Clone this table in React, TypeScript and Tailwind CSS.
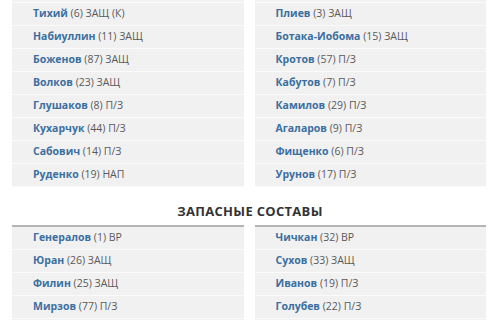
const lineup: [string, string, string][][] = [
  [
    ["Тихий", "6", "ЗАЩ (К)"],
    ["Набиуллин", "11", "ЗАЩ"],
    ["Боженов", "87", "ЗАЩ"],
    ["Волков", "23", "ЗАЩ"],
    ["Глушаков", "8", "П/З"],
    ["Кухарчук", "44", "П/З"],
    ["Сабович", "14", "П/З"],
    ["Руденко", "19", "НАП"],
  ],
  [
    ["Плиев", "3", "ЗАЩ"],
    ["Ботака-Иобома", "15", "ЗАЩ"],
    ["Кротов", "57", "П/З"],
    ["Кабутов", "7", "П/З"],
    ["Камилов", "29", "П/З"],
    ["Агаларов", "9", "П/З"],
    ["Фищенко", "6", "П/З"],
    ["Урунов", "17", "П/З"],
  ],
];

const subs: [string, string, string][][] = [
  [
    ["Генералов", "1", "ВР"],
    ["Юран", "26", "ЗАЩ"],
    ["Филин", "25", "ЗАЩ"],
    ["Мирзов", "77", "П/З"],
    ["", "", ""],
  ],
  [
    ["Чичкан", "32", "ВР"],
    ["Сухов", "33", "ЗАЩ"],
    ["Иванов", "19", "П/З"],
    ["Голубев", "22", "П/З"],
    ["", "", ""],
  ],
];

const Row = ({ p }: { p: [string, string, string] }) => (
  <div className="h-[23px] bg-[#f1f1f1] border-b border-[#fbfbfb] flex items-center pl-[21px] text-[10.5px] whitespace-nowrap">
    {p[0] && (
      <>
        <span className="font-bold text-[#3b6fa0]">{p[0]}</span>
        <span className="text-[#5a5a5a]">&nbsp;({p[1]}) {p[2]}</span>
      </>
    )}
  </div>
);

const Column = ({ rows, top }: { rows: [string, string, string][]; top?: string }) => (
  <div className={top}>
    {rows.map((p, i) => (
      <Row key={i} p={p} />
    ))}
  </div>
);

export default function App() {
  return (
    <div
      className="w-[500px] h-[320px] overflow-hidden bg-white"
      style={{ fontFamily: "'Open Sans', 'DejaVu Sans', sans-serif" }}
    >
      <div className="px-[12px] -mt-[20px]">
        <div className="grid grid-cols-2 gap-[11px] w-[474px]">
          <Column rows={[["", "", ""], ...lineup[0]]} />
          <Column rows={[["", "", ""], ...lineup[1]]} />
        </div>
        <div className="h-[38px] flex items-start justify-center pt-[16px] leading-[16px] text-[13px] font-bold text-[#333] tracking-[0.3px]">
          ЗАПАСНЫЕ СОСТАВЫ
        </div>
        <div className="grid grid-cols-2 gap-[11px] w-[474px]">
          <Column rows={subs[0]} top="border-t-2 border-[#b5b5b5]" />
          <Column rows={subs[1]} top="border-t-2 border-[#b5b5b5]" />
        </div>
      </div>
    </div>
  );
}
